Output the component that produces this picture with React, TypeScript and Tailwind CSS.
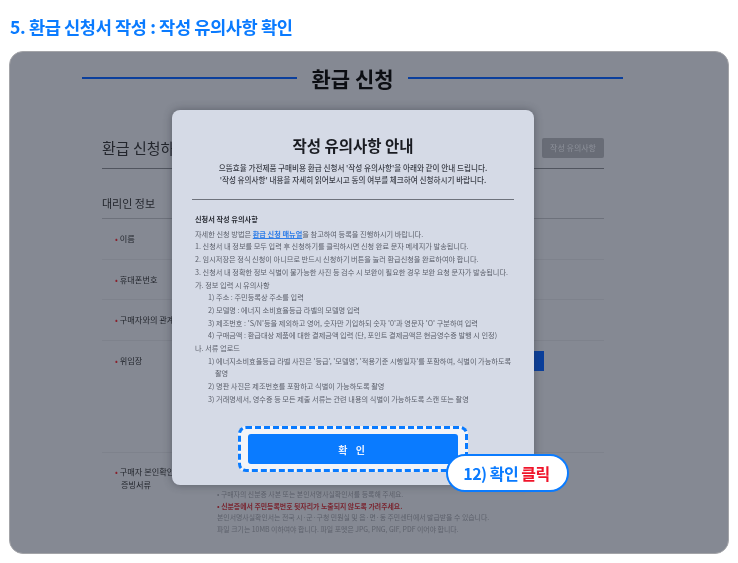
const FONT = "font-['Noto_Sans_CJK_KR','Noto_Sans',sans-serif]";

const rows = [
  { label: "이름", height: "h-[41px]" },
  { label: "휴대폰번호", height: "h-[40px]" },
  { label: "구매자와의 관계", height: "h-[41px]" },
  { label: "위임장", height: "h-[112px]" },
];

const notes = [
  { text: "• 구매자의 신분증 사본 또는 본인서명사실확인서를 등록해 주세요.", color: "text-[#5d616b]" },
  { text: "• 신분증에서 주민등록번호 뒷자리가 노출되지 않도록 가려주세요.", color: "text-[#7a2530] font-bold" },
  { text: "본인서명사실확인서는 전국 시·군·구청 민원실 및 읍·면·동 주민센터에서 발급받을 수 있습니다.", color: "text-[#5d616b]" },
  { text: "파일 크기는 10MB 이하여야 합니다. 파일 포멧은 JPG, PNG, GIF, PDF 이어야 합니다.", color: "text-[#5d616b]" },
];

const guide: { text: string; indent?: string }[] = [
  { text: "1. 신청서 내 정보를 모두 입력 후 신청하기를 클릭하시면 신청 완료 문자 메세지가 발송됩니다." },
  { text: "2. 임시저장은 정식 신청이 아니므로 반드시 신청하기 버튼을 눌러 환급신청을 완료하여야 합니다." },
  { text: "3. 신청서 내 정확한 정보 식별이 불가능한 사진 등 검수 시 보완이 필요한 경우 보완 요청 문자가 발송됩니다." },
  { text: "가. 정보 입력 시 유의사항" },
  { text: "1) 주소 : 주민등록상 주소를 입력", indent: "pl-[13px]" },
  { text: "2) 모델명 : 에너지 소비효율등급 라벨의 모델명 입력", indent: "pl-[13px]" },
  { text: "3) 제조번호 : 'S/N'등을 제외하고 영어, 숫자만 기입하되 숫자 '0'과 영문자 'O' 구분하여 입력", indent: "pl-[13px]" },
  { text: "4) 구매금액 : 환급대상 제품에 대한 결제금액 입력 (단, 포인트 결제금액은 현금영수증 발행 시 인정)", indent: "pl-[13px]" },
  { text: "나. 서류 업로드" },
  { text: "1) 에너지소비효율등급 라벨 사진은 '등급', '모델명', '적용기준 시행일자'를 포함하여, 식별이 가능하도록", indent: "pl-[13px]" },
  { text: "촬영", indent: "pl-[20px]" },
  { text: "2) 명판 사진은 제조번호를 포함하고 식별이 가능하도록 촬영", indent: "pl-[13px]" },
  { text: "3) 거래명세서, 영수증 등 모든 제출 서류는 관련 내용의 식별이 가능하도록 스캔 또는 촬영", indent: "pl-[13px]" },
];

function FormBehind() {
  return (
    <div className="h-full pl-[72px] pr-[105px] pt-[13px]">
      <div className="flex items-center gap-[14px]">
        <div className="h-[2px] flex-1 bg-[#0b3f9c]" />
        <h2 className="text-[21px] font-bold leading-[26px] text-[#0c0e13]">환급 신청</h2>
        <div className="h-[2px] flex-1 bg-[#0b3f9c]" />
      </div>
      <div className="ml-[20px] mr-[19px] mt-[47px]">
        <div className="flex h-[31px] items-start justify-between border-b border-[#51555f]">
          <div className="text-[15px] leading-[20px] text-[#23262d]">환급 신청하기</div>
          <button className="flex h-[20px] w-[62px] items-center justify-center rounded-[2px] bg-[#686c76] text-[8px] text-[#8d919a]">
            작성 유의사항
          </button>
        </div>
        <div className="flex h-[50px] items-end border-b border-[#6d717b] pb-[7px] text-[11px] text-[#23262d]">대리인 정보</div>
        {rows.map((row) => (
          <div key={row.label} className={`${row.height} border-b border-[#7e828c] pl-[13px] pt-[12px] text-[8.2px] leading-[14px] text-[#23262d]`}>
            <span className="mr-[2px] text-[#8a1f2b]">•</span>
            {row.label}
          </div>
        ))}
        <div className="pl-[13px] pt-[12px] text-[8.2px] leading-[13px] text-[#23262d]">
          <span className="mr-[2px] text-[#8a1f2b]">•</span>구매자 본인확인
          <div className="pl-[6px]">증빙서류</div>
        </div>
        <div className="ml-[115px] mt-[-2px] flex flex-col text-[6.9px] leading-[11.7px]">
          {notes.map((note) => (
            <div key={note.text} className={note.color}>{note.text}</div>
          ))}
        </div>
      </div>
    </div>
  );
}

function NoticeModal() {
  return (
    <div className="absolute left-[162px] top-[58px] flex h-[375px] w-[362px] flex-col rounded-[8px] bg-[#d5dae6] px-[20px] shadow-[0_0_8px_rgba(40,44,55,0.45)]">
      <h3 className="mt-[24px] text-center text-[15.5px] font-bold leading-[22px] text-[#191b21]">작성 유의사항 안내</h3>
      <p className="mt-[6px] whitespace-nowrap text-center text-[7.6px] font-medium leading-[11.5px] text-[#3a3d46]">
        으뜸효율 가전제품 구매비용 환급 신청서 '작성 유의사항'을 아래와 같이 안내 드립니다.
        <br />
        '작성 유의사항' 내용을 자세히 읽어보시고 동의 여부를 체크하여 신청하시기 바랍니다.
      </p>
      <div className="mt-[14px] h-px bg-[#6e727c]" />
      <div className="pl-[3px] pt-[13px] text-[7.2px] leading-[12.7px] text-[#5c606b]">
        <div className="mb-[2px] font-bold text-[#2a2d35]">신청서 작성 유의사항</div>
        <div>
          자세한 신청 방법은{" "}
          <span className="font-bold text-[#2f7ee8] underline">환급 신청 매뉴얼</span>
          을 참고하여 등록을 진행하시기 바랍니다.
        </div>
        {guide.map((line) => (
          <div key={line.text} className={`whitespace-nowrap ${line.indent ?? ""}`}>{line.text}</div>
        ))}
      </div>
      <div className="absolute left-[66px] top-[316px] flex h-[46px] w-[230px] items-center justify-center rounded-[8px] border-[3px] border-dashed border-[#0a7bff] bg-white/70">
        <button className="h-[30px] w-[210px] rounded-[3px] bg-[#0a7bff] text-[10px] font-bold tracking-[3px] text-[#e8f0ff]">
          확 인
        </button>
      </div>
    </div>
  );
}

export default function App() {
  return (
    <div className={`h-[563px] w-[738px] overflow-hidden bg-white blur-[0.3px] ${FONT}`}>
      <h1 className="whitespace-nowrap pl-[10px] pt-[15px] text-[17.6px] font-bold leading-[24px] tracking-[-0.4px] text-[#0a7bff]">
        5. 환급 신청서 작성 : 작성 유의사항 확인
      </h1>
      <div className="relative ml-[9px] mt-[12px] h-[503px] w-[720px] overflow-hidden rounded-[14px] border border-[#a3a4a8] bg-[#858993]">
        <FormBehind />
        <div className="absolute left-[524px] top-[299px] h-[20px] w-[10px] bg-[#0b3f9c]" />
        <NoticeModal />
        <div className="absolute left-[436px] top-[402px] flex h-[38px] w-[123px] items-center justify-center whitespace-nowrap rounded-full border-2 border-[#0a7bff] bg-white pr-[2px] text-[16px] font-bold tracking-[-0.5px] text-[#0a7bff]">
          12) 확인&nbsp;<span className="text-[#f0142a]">클릭</span>
        </div>
      </div>
    </div>
  );
}
